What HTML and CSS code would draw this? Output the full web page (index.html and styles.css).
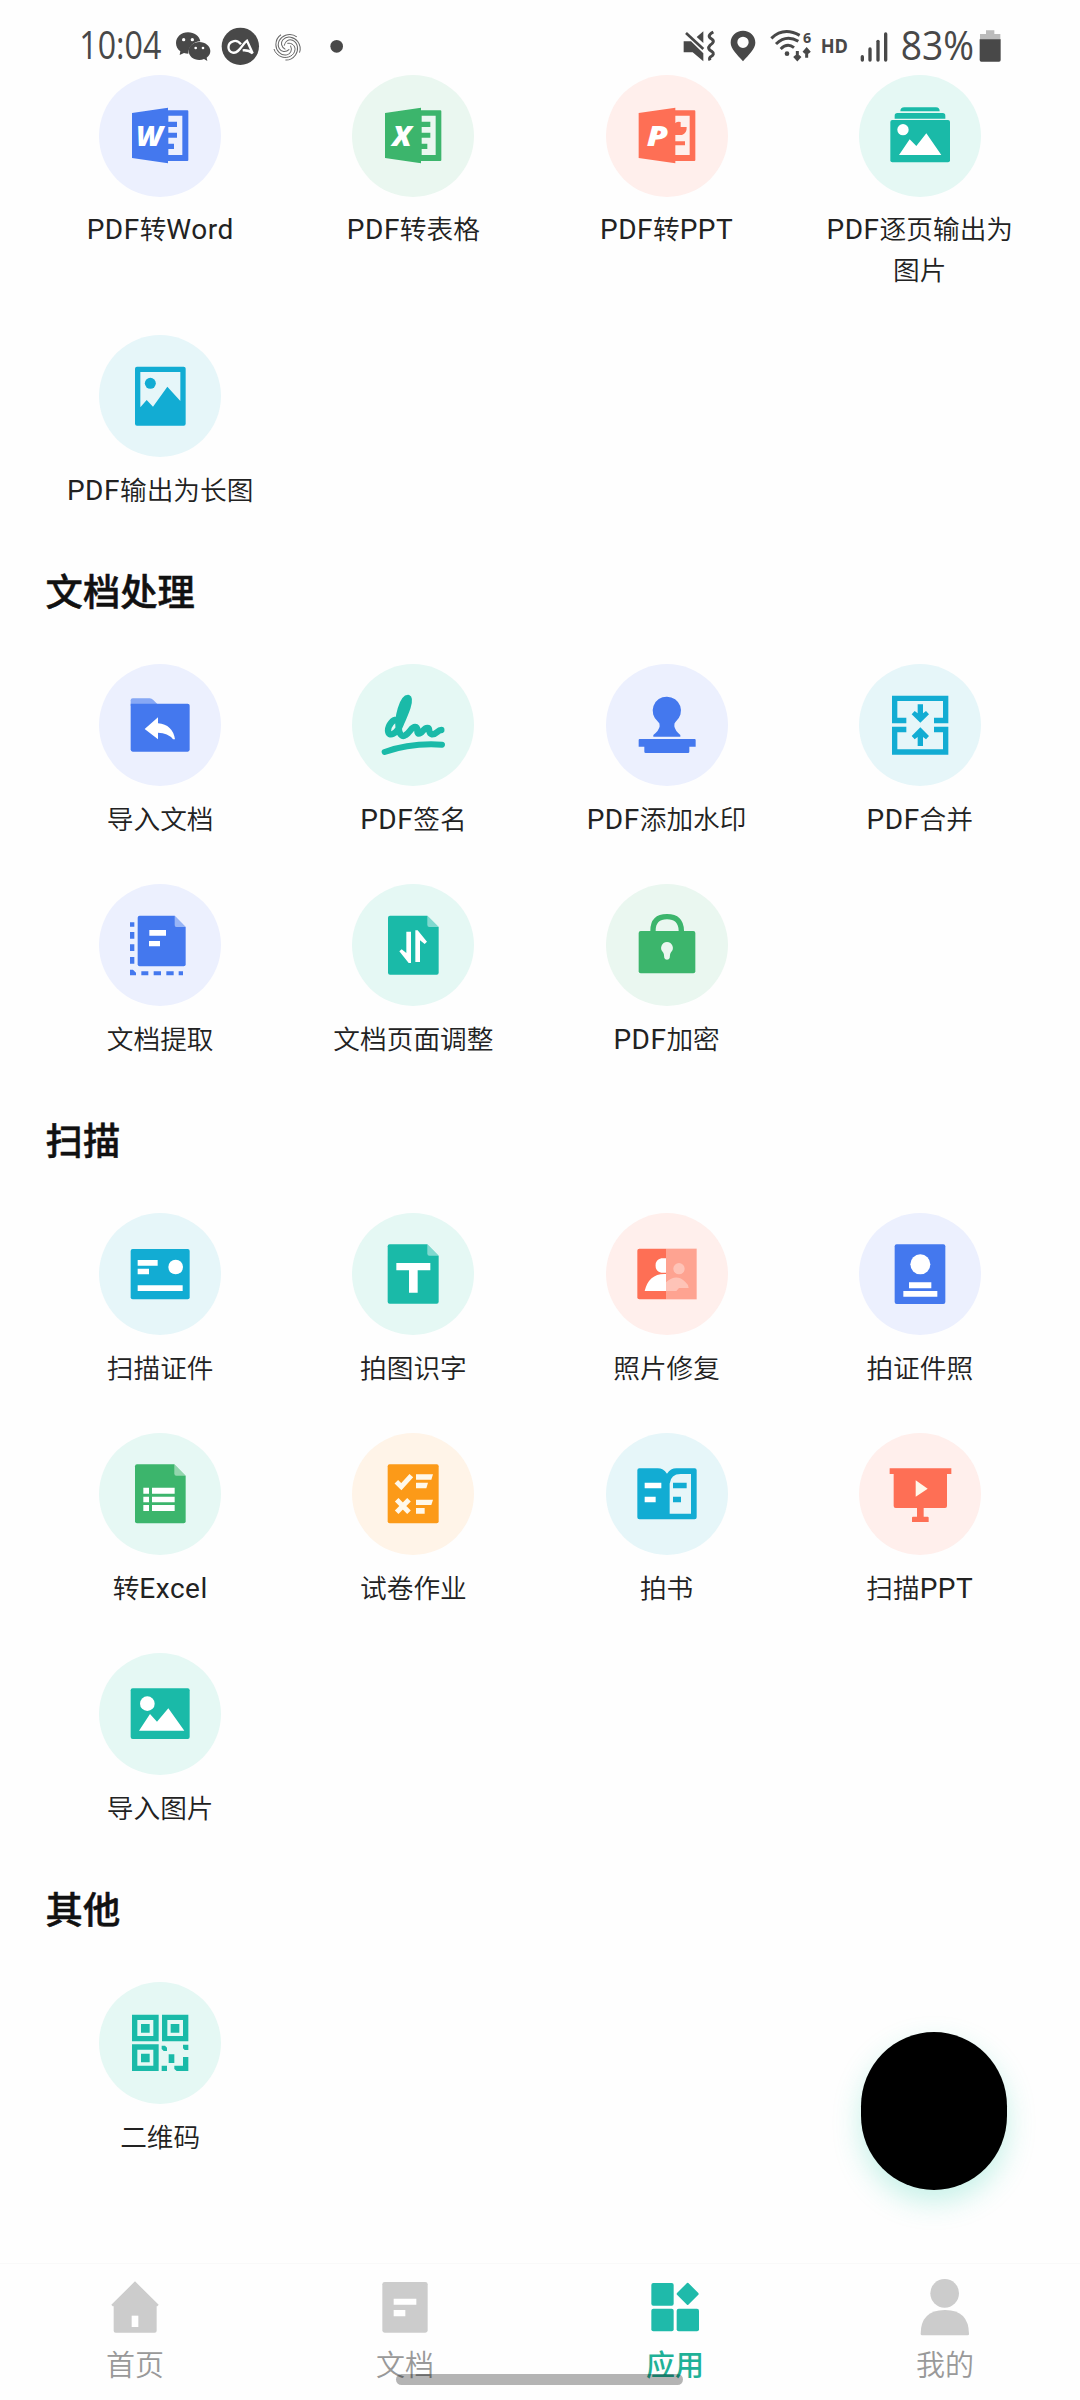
FILE: index.html
```html
<!DOCTYPE html>
<html lang="zh-CN">
<head>
<meta charset="utf-8">
<title>应用</title>
<link rel="stylesheet" href="styles.css">
</head>
<body>
<div class="screen">
  <header class="status">
    <svg class="status-left" viewBox="0 0 720 222">
      <text class="status-text" x="58" y="178" font-size="117" textLength="246" lengthAdjust="spacingAndGlyphs">10:04</text>
      <path d="M384 97c-20 0-36 14-36 32 0 10 5 19 13 25l-2 11 13-6q6 2 13 2c0-22 16-37 36-37-3-16-18-27-37-27z"/>
      <path d="M418 126c-18 0-32 12-32 27s14 27 32 27q8 0 14-3l10 6-2-10c7-5 11-12 11-20 0-15-15-27-33-27z"/>
      <g class="knock"><circle cx="371" cy="119" r="5"/><circle cx="397" cy="119" r="5"/><circle cx="407" cy="144" r="4"/><circle cx="429" cy="144" r="4"/></g>
      <circle cx="541" cy="139" r="56"/>
      <path class="knock-line" d="M543 133c-7-9-16-12-24-9-18 6-18 29-1 34 20 4 28-26 43-36l17 38c-9-8-19-10-30-9" stroke-width="7"/>
      <g class="swirl" transform="translate(682 140)">
        <path d="M0-10C15-12 24-2 23 9 21 28 0 36-16 31-28 27-37 18-40 7"/>
        <path transform="rotate(72)" d="M0-10C15-12 24-2 23 9 21 28 0 36-16 31-28 27-37 18-40 7"/>
        <path transform="rotate(144)" d="M0-10C15-12 24-2 23 9 21 28 0 36-16 31-28 27-37 18-40 7"/>
        <path transform="rotate(216)" d="M0-10C15-12 24-2 23 9 21 28 0 36-16 31-28 27-37 18-40 7"/>
        <path transform="rotate(288)" d="M0-10C15-12 24-2 23 9 21 28 0 36-16 31-28 27-37 18-40 7"/>
      </g>
      <circle cx="830" cy="139" r="19"/>
    </svg>
    <svg class="status-right" viewBox="300 0 990 222">
      <path d="M311 124h22l37 36v24l-32-27h-27zM350 111l20-17v35z"/>
      <path class="line" d="M318 99l52 48" stroke-width="8"/>
      <path class="line" d="M400 96q-22 11-5 21 12 8-5 19-10 10 5 18 12 8-4 17-4 4-1 10" stroke-width="9"/>
      <path d="M489 92c-21 0-37 16-37 36 0 19 19 35 37 56 18-21 37-37 37-56 0-20-16-36-37-36zm0 52a17 17 0 1 1 0-34 17 17 0 0 1 0 34z"/>
      <g class="line" stroke-width="9"><path d="M574 115q37-36 85-9"/><path d="M588 132q31-30 67-8"/><path d="M602 147q20-20 40-4"/><path d="M652 153v24m-9-9l9 10 9-10"/><path d="M680 173v-24m-9 9l9-10 9 10"/></g>
      <circle cx="621" cy="161" r="7"/>
      <text class="status-bold" x="669" y="128" font-size="43">6</text>
      <text class="status-bold" x="722" y="158" font-size="61" textLength="82" lengthAdjust="spacingAndGlyphs">HD</text>
      <g class="line" stroke-width="10" stroke-linecap="round"><path d="M847 170v10"/><path d="M870 147v33"/><path d="M894 124v56"/><path d="M917 102v78"/></g>
      <text class="status-text" x="962" y="179" font-size="118" textLength="220" lengthAdjust="spacingAndGlyphs">83%</text>
      <path class="pale" d="M1218 91h25v11h18v19h-61v-19h18z"/>
      <path d="M1199 118h63v62q0 5-5 5h-53q-5 0-5-5z"/>
    </svg>
  </header>

  <main class="content">
    <div class="grid">
      <div class="item"><div class="disc blue"><svg viewBox="117 225 366 366"><path d="M216 339l108-16v8h58q3 0 3 3v146q0 3-3 3h-58v7l-108-16z"/><path class="tint" d="M325 347h42v118h-42v-18h17v-16h-17v-18h26v-15h-26v-17h26v-16h-26z"/><text class="glyph" x="228" y="437" font-size="82" textLength="80" lengthAdjust="spacingAndGlyphs">W</text></svg></div><span class="label"><i>PDF</i>转<i>Word</i></span></div>
      <div class="item"><div class="disc green"><svg viewBox="877 225 366 366"><path d="M976 339l108-16v8h58q3 0 3 3v146q0 3-3 3h-58v7l-108-16z"/><path class="tint" d="M1086 347h42v118h-42v-18h17v-16h-17v-18h26v-15h-26v-17h26v-16h-26z"/><text class="glyph" x="998" y="439" font-size="82" textLength="58" lengthAdjust="spacingAndGlyphs">X</text></svg></div><span class="label"><i>PDF</i>转表格</span></div>
      <div class="item"><div class="disc red"><svg viewBox="76 225 366 366"><path d="M174 339l110-16v8h57q3 0 3 3v146q0 3-3 3h-57v7l-110-16z"/><path class="tint" d="M284 347h43v118h-43v-29h29v-12h-29v-19h20q15-6 14-24h-18v-15q-9-3-16 3z"/><path class="tint" d="M302 363q15 2 16 15h-16z"/><text class="glyph" x="198" y="439" font-size="86" textLength="64" lengthAdjust="spacingAndGlyphs">P</text></svg></div><span class="label"><i>PDF</i>转<i>PPT</i></span></div>
      <div class="item"><div class="disc teal"><svg viewBox="837 225 366 366"><path d="M961 334q0-12 12-12h95q11 0 11 12zM944 356v-9q0-8 8-8h136q8 0 8 8v9z"/><rect x="931" y="360" width="179" height="127" rx="6"/><circle class="white" cx="969" cy="389" r="17"/><path class="white" d="M957 465l32-47 20 20 30-38 45 65z"/></svg></div><span class="label"><i>PDF</i>逐页输出为图片</span></div>
      <div class="item"><div class="disc cyan"><svg viewBox="177 46 366 366"><rect x="285" y="141" width="152" height="177" rx="6"/><path class="tint" d="M301 157h120v87l-39-43-43 60-19-20-19 22z"/><circle cx="331" cy="191" r="16.500"/></svg></div><span class="label"><i>PDF</i>输出为长图</span></div>
    </div>

    <h2 class="title">文档处理</h2>
    <div class="grid">
      <div class="item"><div class="disc blue"><svg viewBox="117 44 366 366"><path opacity=".6" d="M212 170v-17q0-6 6-6h51q6 0 11 5l12 12v6z"/><path d="M212 163h171q6 0 6 6v131q0 7-6 7H218q-6 0-6-7z"/><path class="white" d="M254 239l40-35v18q44 4 51 48h-6q-15-20-45-20v20z"/></svg></div><span class="label">导入文档</span></div>
      <div class="item"><div class="disc teal"><svg viewBox="877 44 366 366"><g class="pen"><path d="M1014 212c-14-4-29 16-29 32 2 22 27 10 39-22 14-32 31-72 21-76-16 0-32 58-28 90 2 21 11 28 21 21 14-9 17-24 28-24 13 1 2 17 11 20 11 1 13-17 26-17 11 0 0 16 14 19 14 1 16-13 28-13" stroke-width="19"/><path d="M975 308q78-28 172-22" stroke-width="18"/></g></svg></div><span class="label"><i>PDF</i>签名</span></div>
      <div class="item"><div class="disc blue"><svg viewBox="136 44 366 366"><path d="M319 142a42 42 0 0 1 26 75q-5 4-4 14 2 13 18 26v5h-81v-5q17-13 19-26 1-10-5-14a42 42 0 0 1 27-75zM237 269h165q3 0 3 3v20h-19v15q0 4-4 4H255q-4 0-4-4v-15h-17v-20q0-3 3-3z"/></svg></div><span class="label"><i>PDF</i>添加水印</span></div>
      <div class="item"><div class="disc cyan"><svg viewBox="896 44 366 366"><path class="frame" d="M1038 213.500h-35V147h153v66.500h-35M1038 240.500h-35V308h153v-67.500h-35"/><path d="M1072 165h16v27l9-7 9 10-26 25-26-25 9-10 9 7zM1072 290h16v-27l9 7 9-10-26-26-26 26 9 10 9-7z"/></svg></div><span class="label"><i>PDF</i>合并</span></div>
      <div class="item"><div class="disc blue"><svg viewBox="117 703 366 366"><path d="M239 798h105l33 34v112q0 6-6 6H239q-6 0-6-6V804q0-6 6-6z"/><path class="fold" d="M344 798l33 34h-28q-5 0-5-6z"/><path class="white" d="M268 841h50v17h-50zM267 874h33v16h-33z"/><path d="M210 818h13v13h-13zM210 847h13v20h-13zM210 884h13v20h-13zM210 922h13v20h-13zM210 960h9l9 9v8h-18zM244 965h21v12h-21zM281 965h22v12h-22zM319 965h22v12h-22zM356 965h13v12h-13z"/></svg></div><span class="label">文档提取</span></div>
      <div class="item"><div class="disc teal"><svg viewBox="877 703 366 366"><path d="M991 798h112l34 34v137q0 6-6 6H991q-6 0-6-6V804q0-6 6-6z"/><path class="fold" d="M1103 798l34 34h-28q-6 0-6-6z"/><path class="white" d="M1040 846h14v94h-7l-28-35 7-6 14 11zM1067 842h7l28 34-7 7-14-11v65h-14z"/></svg></div><span class="label">文档页面调整</span></div>
      <div class="item"><div class="disc green"><svg viewBox="136 703 366 366"><path d="M277 848v-5q0-42 42-42t43 42v5" fill="none" stroke="#3cb56c" stroke-width="16"/><rect x="234" y="844" width="170" height="127" rx="6"/><path class="tint" d="M319 877a18 18 0 0 1 12 31q-4 4-4 17-2 5-8 5t-8-5q0-13-4-17a18 18 0 0 1 12-31z"/></svg></div><span class="label"><i>PDF</i>加密</span></div>
    </div>

    <h2 class="title">扫描</h2>
    <div class="grid">
      <div class="item"><div class="disc cyan"><svg viewBox="207 341 366 366"><rect x="302" y="449" width="177" height="151" rx="6"/><path class="white" d="M323 482h60v17h-60zM323 508h34v17h-34zM323 558h135v17H323z"/><circle class="white" cx="437" cy="503" r="22"/></svg></div><span class="label">扫描证件</span></div>
      <div class="item"><div class="disc teal"><svg viewBox="967 341 366 366"><path d="M1080 435h113l34 34v138q0 6-6 6h-141q-6 0-6-6V441q0-6 6-6z"/><path class="fold" d="M1193 435l34 34h-28q-6 0-6-6z"/><path class="white" d="M1100 491h102v22h-38v67h-26v-67h-38z"/></svg></div><span class="label">拍图识字</span></div>
      <div class="item"><div class="disc red"><svg viewBox="136 41 366 366"><path d="M316 148h-80q-6 0-6 6v140q0 6 6 6h80z"/><rect x="316" y="148" width="92" height="152" opacity=".6"/><path class="white" d="M316 177h-14a22 22 0 0 0 0 43h14zM316 224q-51-3-64 51h64z"/><g class="white" opacity=".35"><circle cx="355" cy="208" r="17"/><path d="M316 275v-26q31-28 58-1 9 7 10 18h-29l-8 9z"/></g></svg></div><span class="label">照片修复</span></div>
      <div class="item"><div class="disc blue"><svg viewBox="896 41 366 366"><rect x="1003" y="135" width="152" height="179" rx="6"/><circle class="white" cx="1080" cy="195" r="30"/><path class="white" d="M1046 249h67v18h-67zM1029 275h102v17h-102z"/></svg></div><span class="label">拍证件照</span></div>
      <div class="item"><div class="disc green-teal"><svg viewBox="207 1001 366 366"><path d="M321 1095h112l34 34v137q0 6-6 6H321q-6 0-6-6v-165q0-6 6-6z"/><path class="fold" d="M433 1095l34 34h-28q-6 0-6-6z"/><path class="white" d="M340 1165h17v18h-17zM366 1165h68v18h-68zM340 1192h17v17h-17zM366 1192h68v17h-68zM340 1217h17v18h-17zM366 1217h68v18h-68z"/></svg></div><span class="label">转<i>Excel</i></span></div>
      <div class="item"><div class="disc orange"><svg viewBox="967 1001 366 366"><rect x="1074" y="1095" width="153" height="177" rx="6"/><path class="cream" d="M1159 1125h51l-5 16h-46zM1159 1150h36l-5 17h-31zM1159 1201h51l-5 16h-46zM1159 1226h26v17h-26z"/><path class="cream-line" d="M1100 1147l15 15 30-33M1101 1201l37 38m0-38l-37 38"/></svg></div><span class="label">试卷作业</span></div>
      <div class="item"><div class="disc cyan"><svg viewBox="136 701 366 366"><path d="M236 807h55q17 0 28 16 11-16 28-16h55q6 0 6 6v141q0 6-6 6H236q-6 0-6-6V813q0-6 6-6z"/><path class="tint" d="M327 943v-90q3-29 33-29h31v119z"/><path class="white" d="M252 850h50v17h-50zM252 892h33v17h-33z"/><path d="M337 850h41v17h-41zM337 892h24v17h-24z"/></svg></div><span class="label">拍书</span></div>
      <div class="item"><div class="disc red"><svg viewBox="896 701 366 366"><path d="M988 807h185v17h-13v96q0 6-6 6h-64v26h12q3 0 3 3v13h-50v-13q0-3 3-3h12v-26h-64q-6 0-6-6v-96h-12z"/><path class="cream" d="M1066 843l36 25-36 24z"/></svg></div><span class="label">扫描<i>PPT</i></span></div>
      <div class="item"><div class="disc teal"><svg viewBox="207 41 366 366"><rect x="302" y="147" width="177" height="152" rx="6"/><circle class="white" cx="352" cy="193" r="22"/><path class="white" d="M327 274l33-50 21 23 34-40 48 67z"/></svg></div><span class="label">导入图片</span></div>
    </div>

    <h2 class="title">其他</h2>
    <div class="grid">
      <div class="item"><div class="disc teal"><svg viewBox="207 1028 366 366"><path fill-rule="evenodd" d="M306 1126h80v80h-80zm16 16v48h48v-48zM396 1126h79v80h-79zm16 16v48h47v-48zM306 1215h80v80h-80zm16 16v48h48v-48zM333 1154h26v26h-26zM422 1154h26v26h-26zM333 1243h26v26h-26zM395 1219h10l6 6v10h-10l-6-6zM459 1216h16v16h-11l-5-5zM416 1245h17v26h-17zM395 1279h16v16h-16zM433 1279h26v-26h16v42h-35l-7-6z"/></svg></div><span class="label">二维码</span></div>
    </div>
  </main>

  <nav class="tabs">
    <div class="tab"><svg viewBox="143 75 162 183"><path d="M224 94l71 70-4 5h-2v73q0 6-6 6H166q-6 0-6-6v-73h-3l-4-5z"/><path class="white" d="M214 197h20v34h-20z"/></svg><span>首页</span></div>
    <div class="tab"><svg viewBox="953 75 162 183"><rect x="966" y="96" width="136" height="152" rx="7"/><path class="white" d="M1000 146h68v18h-68zM1000 180h35v19h-35z"/></svg><span>文档</span></div>
    <div class="tab active"><svg viewBox="263 75 162 183"><rect x="273" y="99" width="67" height="68" rx="6"/><rect x="273" y="176" width="67" height="68" rx="6"/><rect x="349" y="176" width="67" height="68" rx="6"/><path d="M380 99q2-1 4 0l30 30q2 3 0 5l-30 30q-2 2-4 0l-30-30q-2-2 0-5z"/></svg><span>应用</span></div>
    <div class="tab"><svg viewBox="1074 75 162 183"><circle cx="1154" cy="130" r="43"/><path d="M1082 252q0-71 72-72t73 72q0 4-4 4h-137q-4 0-4-4z"/></svg><span>我的</span></div>
  </nav>
  <div class="fab"></div>
  <div class="home-bar"></div>
</div>
</body>
</html>
```
FILE: styles.css
```css
* { box-sizing: border-box; }
body { margin: 0; background: #fefefe; }
.screen {
  position: relative;
  display: flex;
  flex-direction: column;
  width: 1080px;
  height: 2400px;
  overflow: hidden;
  background: #fefefe;
  color: #222;
  font-family: "Noto Sans CJK SC", sans-serif;
}

.status { display: flex; justify-content: space-between; flex: none; height: 74.5px; padding: 0 70px 0 60px; }
.status svg { height: 74px; fill: #484848; overflow: visible; }
.status-left { width: 240px; }
.status-right { width: 330px; }
.status-text { font-family: "Open Sans", sans-serif; font-weight: 400; }
.status-bold { font-family: "Open Sans", sans-serif; font-weight: 700; }
.status .knock { fill: #fff; }
.status .knock-line { fill: none; stroke: #fff; }
.status .line { fill: none; stroke: #484848; }
.status .swirl { fill: none; stroke: #666; stroke-width: 3; }
.status .pale { fill: #bbb; }

.content { flex: 1; padding: 0 33.6px; }
.grid { display: grid; grid-template-columns: repeat(4, 1fr); row-gap: 44.4px; }
.item { display: flex; flex-direction: column; align-items: center; gap: 10.5px; padding-bottom: 2px; }
.disc { width: 122px; height: 122px; border-radius: 50%; background: var(--tint); }
.disc svg { display: block; width: 122px; height: 122px; fill: var(--ink); }
.blue { --ink: #4478ee; --tint: #ecf0fe; }
.green { --ink: #3cb56c; --tint: #eaf7f0; }
.green-teal { --ink: #3cb56c; --tint: #e6f8f4; }
.red { --ink: #fe6f55; --tint: #ffefec; }
.teal { --ink: #1abaa8; --tint: #e5f8f4; }
.cyan { --ink: #12acd3; --tint: #e6f6f9; }
.orange { --ink: #fc9a18; --tint: #fff4e8; }
.disc .tint { fill: var(--tint); }
.white { fill: #fff; }
.cream { fill: #fff8ea; }
.cream-line { fill: none; stroke: #fff8ea; stroke-width: 15; }
.fold { fill: #fff; fill-opacity: .45; }
.pen { fill: none; stroke: var(--ink); stroke-linecap: round; stroke-linejoin: round; }
.frame { fill: none; stroke: var(--ink); stroke-width: 16; }
.glyph { fill: #fff; font-family: "Open Sans", sans-serif; font-weight: 800; font-style: italic; }

.label { width: 200px; font-size: 26.7px; line-height: 41px; font-weight: 350; text-align: center; }
.label i { font-family: Roboto, sans-serif; font-style: normal; font-weight: 400; font-size: 28px; line-height: 1; letter-spacing: .5px; }
.title { margin: 0 0 0 12px; height: 153.6px; padding-top: 52px; font-size: 37.3px; line-height: 54px; font-weight: 500; -webkit-text-stroke: .5px #111; color: #111; }

.tabs { display: grid; grid-template-columns: repeat(4, 1fr); flex: none; height: 137px; padding-top: 11px; border-top: 1px solid #f9f9f9; }
.tab { display: flex; flex-direction: column; align-items: center; color: #999; fill: #ccc; }
.tab svg { width: 54px; height: 61px; }
.tab span { font-size: 29px; line-height: 54px; font-weight: 350; }
.tab .white { fill: #fff; }
.tab.active { color: #1fb197; fill: #1fbaaa; }
.tab.active span { font-weight: 500; }

.fab { position: absolute; left: 861px; top: 2032px; width: 146px; height: 158px; border-radius: 50% / 47%; background: #000; box-shadow: 0 12px 28px rgba(40, 205, 170, .26); }
.home-bar { position: absolute; left: 396px; top: 2374px; width: 287px; height: 11px; border-radius: 6px; background: rgba(0, 0, 0, .29); }
```
